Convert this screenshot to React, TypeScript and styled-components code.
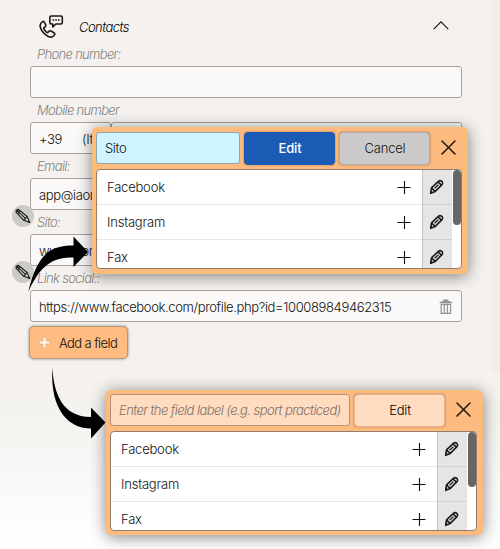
import React from "react";
import styled, { createGlobalStyle, css } from "styled-components";

const GlobalStyle = createGlobalStyle`
  * { box-sizing: border-box; }
  body { margin: 0; }
  button, input { font: inherit; letter-spacing: inherit; color: inherit; margin: 0; }
`;

const Page = styled.main`
  position: relative;
  width: 500px;
  height: 549px;
  overflow: hidden;
  color: #111;
  font-family: Inter, "Liberation Sans", sans-serif;
  font-size: 13px;
  font-weight: 300;
  letter-spacing: -0.36px;
  background: linear-gradient(#f4f1ee 0, #f4f1ee 370px, #f5f3f0 420px, #fff 545px);
`;

const Card = styled.section`
  width: 492px;
  height: 372px;
  padding: 11px 30px 0;
  background: #f4f1ee;
  box-shadow: 8px 0 0 #f0edea;
`;

const Header = styled.header`
  display: flex;
  align-items: center;
  height: 31px;
  padding: 0 13px 0 9px;
`;

const Title = styled.h2`
  flex: 1;
  margin: 0 0 0 15px;
  font-size: 13px;
  font-weight: 300;
  font-style: italic;
  letter-spacing: -0.55px;
  color: #000;
`;

const Label = styled.label`
  display: block;
  height: 24px;
  padding-left: 7px;
  font-style: italic;
  line-height: 25px;
  letter-spacing: -0.68px;
  color: #858381;
`;

const Field = styled.div<{ $segment?: boolean }>`
  display: flex;
  align-items: center;
  justify-content: ${(p) => (p.$segment ? "flex-start" : "space-between")};
  flex: ${(p) => (p.$segment ? "0 0 81px" : "1")};
  gap: 20px;
  height: 32px;
  padding: 1px 0 0 8px;
  padding-right: ${(p) => (p.$segment ? 0 : 8)}px;
  overflow: hidden;
  white-space: nowrap;
  border: 1px solid #a5a2a0;
  border-radius: 3px;
  background: #faf9f7;
`;

const FieldRow = styled.div`
  display: flex;
`;

const AddButton = styled.button`
  display: flex;
  align-items: center;
  gap: 8px;
  width: 99px;
  height: 33px;
  margin: 4px 0 0 -1px;
  padding: 0 0 0 8px;
  letter-spacing: -0.6px;
  white-space: nowrap;
  border: 1px solid #b8977a;
  border-radius: 5px;
  background: #ffbb80;
  box-shadow: 0 0 3px #8b8580;
`;

const EditBadge = styled.span<{ $top: number }>`
  position: absolute;
  left: 12px;
  top: ${(p) => p.$top}px;
  display: grid;
  place-items: center;
  width: 22px;
  height: 22px;
  border-radius: 50%;
  background: #cccac7;
`;

const Pointer = styled.svg`
  position: absolute;
  left: 0;
  top: 0;
  pointer-events: none;
`;

const Popup = styled.div<{ $lower?: boolean }>`
  position: absolute;
  left: ${(p) => (p.$lower ? 106 : 92)}px;
  top: ${(p) => (p.$lower ? 390 : 127)}px;
  width: ${(p) => (p.$lower ? 377 : 376)}px;
  padding: ${(p) => (p.$lower ? "4px 6px 4px 4px" : "5px 6px 5px 4px")};
  border-radius: 5px;
  background: #fdbb80;
  box-shadow: 0 2px 16px rgba(0, 0, 0, 0.48);
`;

const Toolbar = styled.div`
  display: flex;
  align-items: center;
  height: 32px;
  margin-bottom: 5px;
`;

const LabelInput = styled.input<{ $filled?: boolean }>`
  width: ${(p) => (p.$filled ? 144 : 240)}px;
  height: 32px;
  padding: 0 8px;
  outline: 0;
  border: 1px solid ${(p) => (p.$filled ? "#91a4a7" : "#b49279")};
  border-radius: 3px;
  background: ${(p) => (p.$filled ? "#cff4ff" : "#ffdbc0")};
  &::placeholder {
    color: #7e7168;
    font-style: italic;
    letter-spacing: -0.56px;
    opacity: 1;
  }
`;

const tones = {
  primary: css`
    color: #fff;
    font-weight: 500;
    background: #1c5bb5;
    border-color: #1c5bb5;
  `,
  neutral: css`
    background: #cacaca;
    border-color: #b5b0ac;
  `,
  soft: css`
    color: #000;
    background: #ffdbc0;
    border-color: #eab58c;
  `,
};

const Action = styled.button<{ $tone: keyof typeof tones }>`
  width: 91px;
  height: 33px;
  margin-left: 4px;
  padding: 0 0 0 1px;
  letter-spacing: -0.2px;
  border: 1px solid;
  border-radius: 4px;
  box-shadow: 0 0 2px rgba(100, 70, 45, 0.7);
  ${(p) => tones[p.$tone]}
`;

const Close = styled.button`
  display: grid;
  place-items: center;
  flex: 1;
  padding: 0 0 1px 5px;
  border: 0;
  background: none;
`;

const ListFrame = styled.div`
  display: flex;
  height: 100px;
  overflow: hidden;
  border: 1px solid #957b69;
  border-radius: 4px;
  background: #fff;
`;

const List = styled.ul`
  flex: 1;
  margin: 0;
  padding: 0;
  list-style: none;
`;

const Item = styled.li`
  display: flex;
  height: 35px;
`;

const ItemName = styled.span`
  display: flex;
  align-items: center;
  justify-content: space-between;
  flex: 1;
  padding: 0 11px 0 10px;
  letter-spacing: -0.2px;
  border-bottom: 1px solid #e8e8e8;
`;

const ItemEdit = styled.span`
  display: grid;
  place-items: center;
  width: 30px;
  padding-right: 2px;
  border-left: 1px solid #c4c4c4;
  border-bottom: 1px solid #d0d0d0;
  background: #e5e5e5;
`;

const ScrollTrack = styled.div`
  width: 9px;
  padding-left: 1px;
`;

const ScrollThumb = styled.div`
  width: 8px;
  height: 55px;
  border-radius: 4px;
  background: #666;
`;

const PhoneIcon = () => (
  <svg width="25" height="24" viewBox="0 0 25 24" fill="none" stroke="#171717" strokeWidth="1.6" strokeLinejoin="round">
    <path d="M3.6 6.6c-2.2 1.5-3.1 3.3-2.2 5.8 1.2 3.6 4.2 7 8 9.1 2.7 1.4 4.4.8 6-1.4.7-.9.4-1.8-.5-2.4l-3-1.7c-.8-.5-1.5-.3-2.1.4l-.7.8c-.4.5-.9.5-1.3.1-1.4-1.1-2.2-2.1-2.9-3.5-.3-.6-.1-1 .4-1.4l.8-.6c.8-.6.9-1.3.5-2.1L5.3 7.2c-.4-.7-1-1-1.7-.6Z" />
    <path d="M12.3 1h9.6c.9 0 1.4.5 1.4 1.4v5.2c0 .9-.5 1.4-1.4 1.4h-5l-3.1 3V9h-1.5c-.9 0-1.4-.5-1.4-1.4V2.4c0-.9.5-1.4 1.4-1.4Z" />
    <path d="M13.6 5h1.6M16.3 5h1.6M19 5h1.6" strokeWidth="1.7" />
  </svg>
);

const ChevronUp = () => (
  <svg width="16" height="12" viewBox="0 0 16 12" fill="none" stroke="#111" strokeWidth="1.1">
    <path d="m.7 8.2 7.3-7.3 7.3 7.3" />
  </svg>
);

const SolidPencil = () => (
  <svg width="16" height="16" viewBox="0 0 16 16" fill="none" stroke="#1e1d1b" strokeWidth="1.1" strokeLinejoin="round">
    <path d="M1.1 4.2 1.3 2.2 3.2 1.2l8.9 7.3 2.7 6.1-6.2-2.3Z" />
    <path d="m2.4 3.2 8.6 7.6M1.2 4.3 3.5 1.4M3 5.7 5.1 2.7M8.8 12.3l3.2-3.7" />
    <path d="m12.4 13.7 1.5-1.5 1.2 2.7Z" fill="#1e1d1b" stroke="none" />
  </svg>
);

const OutlinePencil = () => (
  <svg width="16" height="16" viewBox="0 0 16 16" fill="none" stroke="#1c1c1c" strokeWidth="1.6" strokeLinejoin="round">
    <path d="m2.5 8.9 6.9-6.6c1-.9 2.3-.9 3.4.1 1 .9 1.1 2.2.2 3.2L6.3 12.4l-4.6 1.9.8-5.4Z" />
    <path d="m2.6 9.1 3.6 3.2M8.9 2.9l3.6 3.2" />
    <path d="m5.6 9.3 3.8-3.6" strokeWidth="1.2" />
    <path d="m1.2 14.8.5-3.3 2.5 2Z" fill="#1c1c1c" stroke="none" />
  </svg>
);

const PlusIcon = () => (
  <svg width="14" height="14" viewBox="0 0 14 14" stroke="#111" strokeWidth="1.15">
    <path d="M.5 7.5h13M7.5 1v13" />
  </svg>
);

const CrossIcon = () => (
  <svg width="15" height="15" viewBox="0 0 15 15" stroke="#20150d" strokeWidth="1.5" strokeLinecap="round">
    <path d="m1 1 13 13M14 1 1 14" />
  </svg>
);

const AddIcon = () => (
  <svg width="13" height="13" viewBox="0 0 13 13">
    <path d="M5 1h3v4h4v3H8v4H5V8H1V5h4Z" fill="#fff5ec" stroke="#d7ad87" strokeWidth=".7" />
  </svg>
);

const TrashIcon = () => (
  <svg width="14" height="15" viewBox="0 0 14 15">
    <path d="M4.3 1.7V.5h5v1.2l3.9 1.5v1.1H.6V3.2Z" fill="#949290" />
    <path d="M2.2 5.3h9.4v9.1H2.2ZM5.3 5.3v9M8.5 5.3v9" fill="none" stroke="#949290" strokeWidth="1.2" />
  </svg>
);

const names = ["Facebook", "Instagram", "Fax"];

const FieldPicker = () => (
  <ListFrame>
    <List>
      {names.map((name) => (
        <Item key={name}>
          <ItemName>{name}<PlusIcon /></ItemName>
          <ItemEdit><OutlinePencil /></ItemEdit>
        </Item>
      ))}
    </List>
    <ScrollTrack><ScrollThumb /></ScrollTrack>
  </ListFrame>
);

export default function App() {
  return (
    <Page>
      <GlobalStyle />
      <Card>
        <Header>
          <PhoneIcon />
          <Title>Contacts</Title>
          <ChevronUp />
        </Header>
        <Label>Phone number:</Label>
        <Field />
        <Label>Mobile number</Label>
        <FieldRow>
          <Field $segment><span>+39</span><span>(Ita)</span></Field>
          <Field />
        </FieldRow>
        <Label>Email:</Label>
        <Field>app@iaon</Field>
        <Label>Sito:</Label>
        <Field>www.iaom</Field>
        <Label>Link social::</Label>
        <Field>
          <span>https://www.facebook.com/profile.php?id=100089849462315</span>
          <TrashIcon />
        </Field>
        <AddButton><AddIcon />Add a field</AddButton>
      </Card>

      <EditBadge $top={205}><SolidPencil /></EditBadge>
      <EditBadge $top={261}><SolidPencil /></EditBadge>

      <Popup>
        <Toolbar>
          <LabelInput $filled defaultValue="Sito" />
          <Action $tone="primary">Edit</Action>
          <Action $tone="neutral">Cancel</Action>
          <Close aria-label="Close"><CrossIcon /></Close>
        </Toolbar>
        <FieldPicker />
      </Popup>

      <Popup $lower>
        <Toolbar>
          <LabelInput placeholder="Enter the field label (e.g. sport practiced)" />
          <Action $tone="soft">Edit</Action>
          <Close aria-label="Close"><CrossIcon /></Close>
        </Toolbar>
        <FieldPicker />
      </Popup>

      <Pointer width="108" height="442" viewBox="0 0 108 442">
        <path d="M28.3 292C31 280 36 262 48 252C55 247 64 245.5 73.5 245.5V236.5L88 252 73.5 267V257.5C50 256 38 270 28.3 292Z" />
        <path d="M52.3 368C54 393 62 417 91 417V407.5L105.5 422.5 91 438.5V428.5C70 428.5 50 412 52.3 368Z" />
      </Pointer>
    </Page>
  );
}
